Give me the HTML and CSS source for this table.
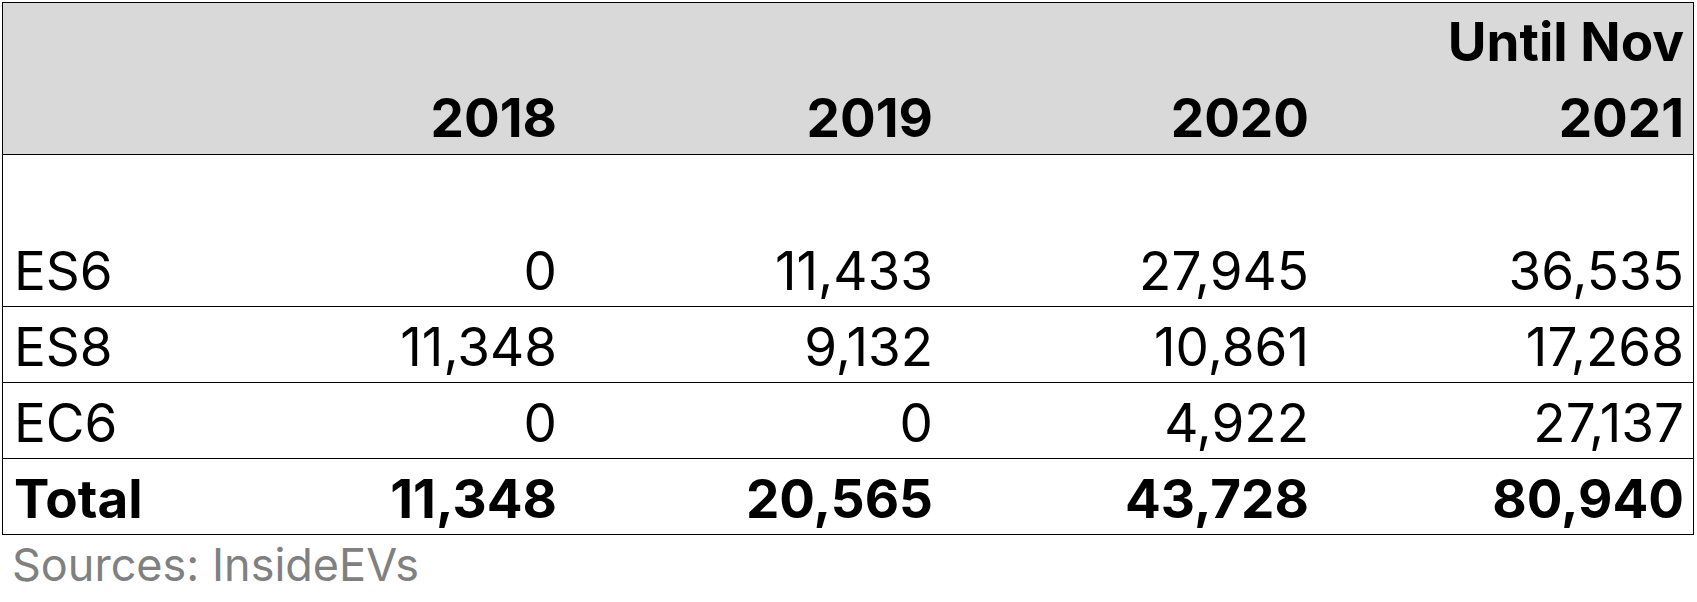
FILE: index.html
```html
<!DOCTYPE html>
<html>
<head>
<meta charset="utf-8">
<link rel="stylesheet" href="styles.css">
</head>
<body>
<div class="table">
  <div class="row head">
    <div class="cell label"></div>
    <div class="cell num"><span class="ln">2018</span></div>
    <div class="cell num"><span class="ln">2019</span></div>
    <div class="cell num"><span class="ln">2020</span></div>
    <div class="cell num"><span class="ln">Until Nov</span><span class="ln">2021</span></div>
  </div>
  <div class="row spacer"></div>
  <div class="row">
    <div class="cell label">ES6</div>
    <div class="cell num">0</div>
    <div class="cell num">11,433</div>
    <div class="cell num">27,945</div>
    <div class="cell num">36,535</div>
  </div>
  <div class="row">
    <div class="cell label">ES8</div>
    <div class="cell num">11,348</div>
    <div class="cell num">9,132</div>
    <div class="cell num">10,861</div>
    <div class="cell num">17,268</div>
  </div>
  <div class="row">
    <div class="cell label">EC6</div>
    <div class="cell num">0</div>
    <div class="cell num">0</div>
    <div class="cell num">4,922</div>
    <div class="cell num">27,137</div>
  </div>
  <div class="row total">
    <div class="cell label">Total</div>
    <div class="cell num">11,348</div>
    <div class="cell num">20,565</div>
    <div class="cell num">43,728</div>
    <div class="cell num">80,940</div>
  </div>
</div>
<div class="source">Sources: InsideEVs</div>
</body>
</html>
```

FILE: styles.css
```css
html, body {
  margin: 0;
  padding: 0;
  background: #ffffff;
}
body {
  padding: 2px 0 0 2px;
  font-family: Inter, "Liberation Sans", sans-serif;
  color: #000000;
}
.table {
  width: 1690px;
  border: 1px solid #000000;
}
.row {
  display: grid;
  grid-template-columns: 189px 374px 376px 376px 375px;
  height: 75px;
  align-items: end;
  border-bottom: 1px solid #000000;
  font-size: 53px;
  line-height: 70px;
}
.row:last-child {
  border-bottom: none;
}
.head {
  height: 151px;
  background: #d9d9d9;
  font-weight: 700;
}
.spacer {
  height: 76px;
  border-bottom: none;
}
.total {
  font-weight: 700;
}
.cell {
  padding-bottom: 0;
  white-space: nowrap;
}
.head .cell {
  padding-bottom: 1px;
  display: flex;
  flex-direction: column;
  align-items: flex-end;
  gap: 6px;
}
.label {
  padding-left: 11px;
}
.num {
  text-align: right;
  padding-right: 9px;
}
.source {
  font-size: 45px;
  line-height: 50px;
  color: #808080;
  padding-left: 10px;
  padding-top: 5px;
}
```
